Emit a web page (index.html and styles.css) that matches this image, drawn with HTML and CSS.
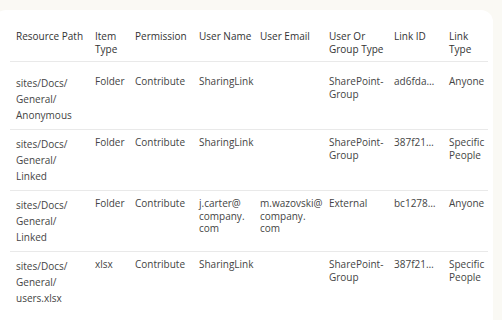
FILE: index.html
```html
<!DOCTYPE html>
<html>
<head>
<meta charset="utf-8">
<link rel="stylesheet" href="styles.css">
</head>
<body>
<div class="card">
  <table class="grid">
    <colgroup>
      <col class="c1"><col class="c2"><col class="c3"><col class="c4"><col class="c5"><col class="c6"><col class="c7"><col class="c8">
    </colgroup>
    <thead>
      <tr>
        <th>Resource Path</th>
        <th>Item Type</th>
        <th>Permission</th>
        <th>User Name</th>
        <th>User Email</th>
        <th>User Or Group Type</th>
        <th>Link ID</th>
        <th>Link Type</th>
      </tr>
    </thead>
    <tbody>
      <tr>
        <td class="path">sites/<wbr>Docs/<wbr>General/<wbr>Anonymous</td>
        <td>Folder</td>
        <td>Contribute</td>
        <td>SharingLink</td>
        <td></td>
        <td>SharePoint-<wbr>Group</td>
        <td>ad6fda…</td>
        <td>Anyone</td>
      </tr>
      <tr>
        <td class="path">sites/<wbr>Docs/<wbr>General/<wbr>Linked</td>
        <td>Folder</td>
        <td>Contribute</td>
        <td>SharingLink</td>
        <td></td>
        <td>SharePoint-<wbr>Group</td>
        <td>387f21…</td>
        <td>Specific People</td>
      </tr>
      <tr>
        <td class="path">sites/<wbr>Docs/<wbr>General/<wbr>Linked</td>
        <td>Folder</td>
        <td>Contribute</td>
        <td>j.carter@<wbr>company.<wbr>com</td>
        <td>m.wazovski@<wbr>company.<wbr>com</td>
        <td>External</td>
        <td>bc1278…</td>
        <td>Anyone</td>
      </tr>
      <tr>
        <td class="path">sites/<wbr>Docs/<wbr>General/<wbr>users.xlsx</td>
        <td>xlsx</td>
        <td>Contribute</td>
        <td>SharingLink</td>
        <td></td>
        <td>SharePoint-<wbr>Group</td>
        <td>387f21…</td>
        <td>Specific People</td>
      </tr>
    </tbody>
  </table>
</div>
</body>
</html>
```
FILE: styles.css
```css
html, body {
  margin: 0;
  padding: 0;
  background: #faf9f4;
}
body {
  font-family: "Open Sans", "Noto Sans", sans-serif;
  font-size: 10px;
  color: #444;
  overflow: hidden;
  height: 320px;
}
.card {
  box-sizing: border-box;
  background: #ffffff;
  margin: 10px 9px 0 -6px;
  border-radius: 12px 12px 0 0;
  padding: 16px 6px 0 16px;
  height: 310px;
  overflow: hidden;
}
.grid {
  border-collapse: collapse;
  table-layout: fixed;
  width: 478px;
}
.c1 { width: 79px; }
.c2 { width: 40px; }
.c3 { width: 64px; }
.c4 { width: 61px; }
.c5 { width: 69px; }
.c6 { width: 65px; }
.c7 { width: 55px; }
.c8 { width: 45px; }
.grid th {
  font-weight: 400;
  color: #333;
  text-align: left;
  vertical-align: top;
  line-height: 12.5px;
  padding: 4px 0 6px 6px;
  border-bottom: 1px solid #e9e9e9;
}
.grid td {
  vertical-align: top;
  line-height: 12.5px;
  padding: 6px 4px 6px 6px;
  border-bottom: 1px solid #e9e9e9;
}
.grid td.path {
  line-height: 16px;
}
.grid tbody tr:first-child td {
  padding-top: 13px;
}
.grid tbody tr:last-child td {
  border-bottom: none;
}
```
